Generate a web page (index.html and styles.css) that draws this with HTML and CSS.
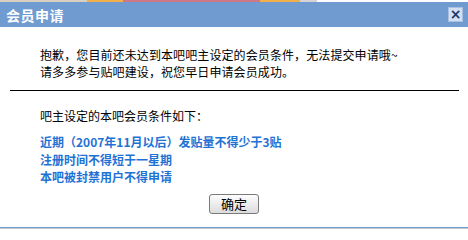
FILE: index.html
```html
<!DOCTYPE html>
<html lang="zh-CN">
<head>
<meta charset="utf-8">
<title>会员申请</title>
<link rel="stylesheet" href="styles.css">
</head>
<body>
<div class="page">
  <div class="topstrip">
    <span class="seg seg-a"></span>
    <span class="seg seg-b"></span>
    <span class="seg seg-c"></span>
    <span class="seg seg-d"></span>
    <span class="seg seg-e"></span>
  </div>
  <div class="dialog">
    <div class="titlebar">
      <span class="title">会员申请</span>
      <span class="close">×</span>
    </div>
    <div class="body">
      <p class="msg">抱歉，您目前还未达到本吧吧主设定的会员条件，无法提交申请哦~<br>请多多参与贴吧建设，祝您早日申请会员成功。</p>
      <div class="rule"></div>
      <p class="cond-head">吧主设定的本吧会员条件如下：</p>
      <ul class="conds">
        <li>近期（2007年11月以后）发贴量不得少于3贴</li>
        <li>注册时间不得短于一星期</li>
        <li>本吧被封禁用户不得申请</li>
      </ul>
      <div class="actions">
        <button class="btn" type="button">确定</button>
      </div>
    </div>
    <div class="bottom"></div>
  </div>
</div>
</body>
</html>
```
FILE: styles.css
```css
html, body {
  margin: 0;
  padding: 0;
  background: #ffffff;
}
.page {
  width: 468px;
  height: 229px;
  overflow: hidden;
  font-family: "Noto Sans CJK SC", "DejaVu Sans", sans-serif;
  font-size: 12px;
  color: #000;
}
.topstrip {
  display: flex;
  height: 2px;
}
.seg { display: block; height: 2px; }
.seg-a { width: 87px; background: #d8cfc0; }
.seg-b { width: 36px; background: #f2b04a; }
.seg-c { width: 137px; background: #cf7786; }
.seg-d { width: 40px; background: #f2b04a; }
.seg-e { width: 17px; background: #d4d4d4; }
.dialog {
  display: flex;
  flex-direction: column;
  height: 227px;
}
.titlebar {
  height: 25px;
  background: #6f9bd1;
  display: flex;
  align-items: center;
  justify-content: space-between;
  padding: 0 5px 0 6px;
}
.title {
  color: #ffffff;
  font-size: 14px;
  font-weight: bold;
  line-height: 16px;
  letter-spacing: 0.5px;
}
.close {
  width: 13px;
  height: 13px;
  border: 1px solid #a9c0e2;
  background: #d3e0f3;
  color: #1d3a6a;
  font-size: 14px;
  font-weight: bold;
  line-height: 13px;
  text-align: center;
  font-family: "DejaVu Sans", sans-serif;
}
.body {
  flex: 1;
  display: flex;
  flex-direction: column;
}
.msg {
  margin: 19px 0 0 40px;
  line-height: 17px;
  letter-spacing: 0.1px;
}
.rule {
  height: 1px;
  background: #000;
  margin: 10px 9px 0 10px;
}
.cond-head {
  margin: 16px 0 0 40px;
  line-height: 17px;
}
.conds {
  list-style: none;
  margin: 9px 0 0 40px;
  padding: 0;
  color: #1f72d4;
  font-weight: bold;
  line-height: 17.5px;
}
.actions {
  display: flex;
  justify-content: center;
  margin-top: 8px;
}
.btn {
  width: 50px;
  height: 20px;
  padding: 0;
  border: 1px solid #7a7a7a;
  border-radius: 3px;
  background: linear-gradient(#fdfdfd, #dcdcdc);
  font-family: "Noto Sans CJK SC", sans-serif;
  font-size: 13px;
  line-height: 18px;
  color: #000;
}
.bottom {
  margin-top: auto;
  height: 1px;
  background: #6e9bd1;
  border-bottom: 1px solid #c8c8c8;
  margin-bottom: 0;
}
```
